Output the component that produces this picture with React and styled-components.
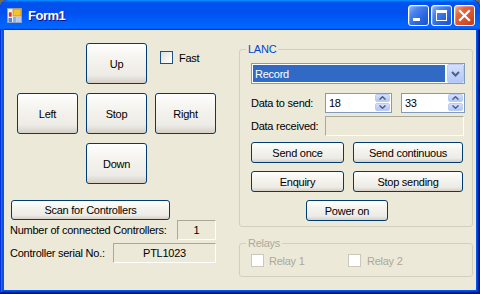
import React from 'react';
import styled, { createGlobalStyle } from 'styled-components';

const Global = createGlobalStyle`
  html, body { margin: 0; padding: 0; background: #6e6b5e; }
  body {
    width: 480px; height: 294px; overflow: hidden;
    font-family: "Liberation Sans", Arial, sans-serif;
  }
`;

const Window = styled.div`
  width: 480px; height: 294px; box-sizing: border-box;
  display: flex; flex-direction: column;
  background: #0055ea;
  border-radius: 8px 8px 0 0;
  overflow: hidden;
  box-shadow: inset -1px -1px #00138c, inset 1px 1px #0831d9,
    inset -2px -2px #001ea0, inset 2px 2px #166aee,
    inset -3px -3px #003bda, inset 3px 3px #0855dd;
`;

const TitleBar = styled.div`
  height: 30px; flex: none; box-sizing: border-box;
  display: flex; align-items: center;
  padding: 0 5px 0 7px;
  border-radius: 8px 8px 0 0;
  background: linear-gradient(180deg, #0997ff, #0053ee 8%, #0050ee 40%, #0066ff 88%, #0066ff 93%, #005bff 95%, #003dd7 96%, #003dd7);
`;

const TitleText = styled.span`
  margin-left: 6px;
  color: #fff;
  font: bold 13px "Liberation Sans", Arial, sans-serif;
  letter-spacing: -0.5px;
  text-shadow: 1px 1px #0f1089;
`;

const TitleButtons = styled.div`
  margin-left: auto;
  display: flex; gap: 2px;
`;

const TitleButton = styled.div`
  width: 21px; height: 21px; box-sizing: border-box;
  border: 1px solid #fff; border-radius: 3px;
  display: flex; align-items: center; justify-content: center;
  background: ${p => p.$close
    ? 'linear-gradient(135deg, #f4a98a 0%, #e2673f 30%, #d9502a 65%, #c43c14 100%)'
    : 'linear-gradient(135deg, #8fb4fa 0%, #4a83ee 30%, #2a66e0 65%, #1c52cf 100%)'};
  box-shadow: inset 1px 1px rgba(255,255,255,0.25);
`;

const Client = styled.div`
  flex: 1;
  margin: 0 4px 4px;
  background: #ece9d8;
  display: grid;
  grid-template-columns: 235px 234px;
  font-size: 11px;
  letter-spacing: -0.25px;
  color: #000;
`;

const LeftColumn = styled.div`
  padding: 13px 0 0 6px;
  display: flex; flex-direction: column; align-items: flex-start;
`;

const DPad = styled.div`
  margin-left: 7px;
  display: grid;
  grid-template-columns: repeat(3, 61px);
  grid-template-rows: repeat(3, 41px);
  column-gap: 8px; row-gap: 9px;
`;

const XPButton = styled.button`
  box-sizing: border-box;
  width: ${p => p.$w ? `${p.$w}px` : '100%'};
  height: ${p => p.$h || 21}px;
  margin: 0; padding: 0;
  border: 1px solid #003c74; border-radius: 3px;
  background: linear-gradient(180deg, #ffffff 0%, #f5f4ef 35%, #ecebe6 80%, #d6d0c5 100%);
  font: 11px "Liberation Sans", Arial, sans-serif;
  letter-spacing: -0.25px;
  color: #000;
  grid-column: ${p => p.$col || 'auto'};
  grid-row: ${p => p.$row || 'auto'};
`;

const CheckRow = styled.label`
  display: flex; align-items: center; gap: ${p => p.$gap || 6}px;
  color: ${p => p.$disabled ? '#aca899' : '#000'};
  grid-column: ${p => p.$col || 'auto'};
  grid-row: ${p => p.$row || 'auto'};
  align-self: start;
  padding: ${p => p.$pad || 0};
  height: 13px;
`;

const CheckBox = styled.span`
  width: 13px; height: 13px; box-sizing: border-box; flex: none;
  border: 1px solid ${p => p.$disabled ? '#cac8bb' : '#1c5180'};
  background: ${p => p.$disabled ? '#ffffff' : 'linear-gradient(135deg, #dcdcd7 0%, #f4f4f1 60%, #ffffff 100%)'};
`;

const ScanButton = styled(XPButton)`
  margin: 16px 0 0 1px;
`;

const InfoRow = styled.div`
  width: 206px; height: 20px;
  margin-top: ${p => p.$mt || 0}px;
  display: flex; align-items: center; justify-content: space-between;
`;

const SunkenBox = styled.div`
  box-sizing: border-box;
  width: ${p => p.$w}px; height: 20px;
  border-top: 1px solid #aca899; border-left: 1px solid #aca899;
  border-bottom: 1px solid #fff; border-right: 1px solid #fff;
  display: flex; align-items: center;
  justify-content: ${p => p.$center ? 'center' : 'flex-start'};
`;

const RightColumn = styled.div`
  padding-top: 19px;
  display: flex; flex-direction: column;
`;

const GroupBox = styled.div`
  position: relative;
  box-sizing: border-box;
  width: 234px;
  margin-top: ${p => p.$mt || 0}px;
  border: 1px solid #d0d0bf; border-radius: 3px;
  padding: ${p => p.$pad};
`;

const GroupTitle = styled.span`
  position: absolute; top: -7px; left: 6px;
  padding: 0 2px;
  line-height: 13px;
  background: #ece9d8;
  color: ${p => p.$disabled ? '#aca899' : '#0046d5'};
`;

const Combo = styled.div`
  box-sizing: border-box; width: 214px; height: 21px;
  border: 1px solid #7f9db9; background: #fff;
  display: flex; padding: 0;
`;

const ComboSelected = styled.div`
  flex: 1; margin: 1px 2px 1px 1px;
  background: #316ac5; color: #fff;
  display: flex; align-items: center; padding-left: 2px;
`;

const BlueButton = styled.div`
  box-sizing: border-box;
  width: ${p => p.$w}px;
  flex: ${p => p.$flex ? 1 : 'none'};
  border: 1px solid #bacbf5; border-radius: 2px;
  background: linear-gradient(180deg, #d5e0fb 0%, #c3d3fa 50%, #b3c6f5 100%);
  display: flex; align-items: center; justify-content: center;
`;

const FormRow = styled.div`
  display: grid;
  grid-template-columns: ${p => p.$cols};
  height: 20px; align-items: center;
  margin-top: ${p => p.$mt || 0}px;
`;

const SecondNumeric = styled.div`
  padding-left: 9px;
`;

const NumericBox = styled.div`
  box-sizing: border-box; height: 20px;
  border: 1px solid #7f9db9; background: #fff;
  display: flex; align-items: stretch;
`;

const NumericValue = styled.div`
  flex: 1; padding-left: 3px;
  display: flex; align-items: center;
`;

const Spin = styled.div`
  width: 15px; margin: 0 1px 1px 0;
  display: flex; flex-direction: column; gap: 1px;
`;

const ButtonGrid = styled.div`
  margin-top: 6px;
  display: grid;
  grid-template-columns: 93px 110px;
  grid-auto-rows: 21px;
  column-gap: 9px; row-gap: 8px;
`;

const PowerButton = styled(XPButton)`
  margin: 8px 0 0 55px;
`;

const RelayRow = styled.div`
  display: grid;
  grid-template-columns: 97px auto;
`;

const ChevronDown = () => (
  <svg width="9" height="6" viewBox="0 0 9 6">
    <path d="M1 1 L4.5 4.5 L8 1" fill="none" stroke="#4d6185" strokeWidth="2" />
  </svg>
);

const SpinArrow = ({ up }) => (
  <svg width="7" height="4" viewBox="0 0 7 4">
    <path d={up ? 'M0.5 3.5 L3.5 0.8 L6.5 3.5' : 'M0.5 0.5 L3.5 3.2 L6.5 0.5'} fill="none" stroke="#4d6185" strokeWidth="1.5" />
  </svg>
);

const AppIcon = () => (
  <svg width="15" height="15" viewBox="0 0 15 15">
    <rect x="0.5" y="0.5" width="14" height="14" fill="#e8eef8" stroke="#8ea4c8" />
    <rect x="6" y="1" width="8" height="7" fill="#f6c22c" stroke="#c48a10" strokeWidth="0.8" />
    <rect x="1.5" y="4" width="3.5" height="5" fill="#e0301e" stroke="#fff" strokeWidth="0.6" />
    <rect x="1.5" y="10" width="3.5" height="4" fill="#5a82d0" />
    <rect x="6" y="9" width="3.5" height="5" fill="#8fb0e6" />
    <rect x="10" y="9" width="4" height="5" fill="#b5c9ee" />
  </svg>
);

const NumericUpDown = ({ value }) => (
  <NumericBox>
    <NumericValue>{value}</NumericValue>
    <Spin>
      <BlueButton $flex><SpinArrow up /></BlueButton>
      <BlueButton $flex><SpinArrow /></BlueButton>
    </Spin>
  </NumericBox>
);

export default function App() {
  return (
    <>
      <Global />
      <Window>
        <TitleBar>
          <AppIcon />
          <TitleText>Form1</TitleText>
          <TitleButtons>
            <TitleButton>
              <svg width="19" height="19" viewBox="0 0 19 19">
                <rect x="4" y="12" width="7" height="3" fill="#fff" />
              </svg>
            </TitleButton>
            <TitleButton>
              <svg width="19" height="19" viewBox="0 0 19 19">
                <rect x="4.5" y="4.5" width="10" height="10" fill="none" stroke="#fff" />
                <rect x="4" y="4" width="11" height="3" fill="#fff" />
              </svg>
            </TitleButton>
            <TitleButton $close>
              <svg width="19" height="19" viewBox="0 0 19 19">
                <path d="M5 5 L14 14 M14 5 L5 14" stroke="#fff" strokeWidth="2.2" strokeLinecap="square" />
              </svg>
            </TitleButton>
          </TitleButtons>
        </TitleBar>

        <Client>
          <LeftColumn>
            <DPad>
              <XPButton $h={41} $col={2} $row={1}>Up</XPButton>
              <CheckRow $col={3} $row={1} $pad="8px 0 0 5px">
                <CheckBox />
                Fast
              </CheckRow>
              <XPButton $h={41} $col={1} $row={2}>Left</XPButton>
              <XPButton $h={41} $col={2} $row={2}>Stop</XPButton>
              <XPButton $h={41} $col={3} $row={2}>Right</XPButton>
              <XPButton $h={41} $col={2} $row={3}>Down</XPButton>
            </DPad>
            <ScanButton $w={159} $h={20}>Scan for Controllers</ScanButton>
            <InfoRow>
              <span>Number of connected Controllers:</span>
              <SunkenBox $w={39} $center>1</SunkenBox>
            </InfoRow>
            <InfoRow $mt={3}>
              <span>Controller serial No.:</span>
              <SunkenBox $w={103} $center>PTL1023</SunkenBox>
            </InfoRow>
          </LeftColumn>

          <RightColumn>
            <GroupBox $pad="13px 7px 5px 11px">
              <GroupTitle>LANC</GroupTitle>
              <Combo>
                <ComboSelected>Record</ComboSelected>
                <BlueButton $w={17}><ChevronDown /></BlueButton>
              </Combo>
              <FormRow $cols="74px 67px 73px" $mt={9}>
                <span>Data to send:</span>
                <NumericUpDown value="18" />
                <SecondNumeric>
                  <NumericUpDown value="33" />
                </SecondNumeric>
              </FormRow>
              <FormRow $cols="74px 139px" $mt={3}>
                <span>Data received:</span>
                <SunkenBox $w={139} />
              </FormRow>
              <ButtonGrid>
                <XPButton>Send once</XPButton>
                <XPButton>Send continuous</XPButton>
                <XPButton>Enquiry</XPButton>
                <XPButton>Stop sending</XPButton>
              </ButtonGrid>
              <PowerButton $w={82}>Power on</PowerButton>
            </GroupBox>

            <GroupBox $mt={16} $pad="10px 7px 9px 11px">
              <GroupTitle $disabled>Relays</GroupTitle>
              <RelayRow>
                <CheckRow $disabled $gap={5}>
                  <CheckBox $disabled />
                  Relay 1
                </CheckRow>
                <CheckRow $disabled $gap={6}>
                  <CheckBox $disabled />
                  Relay 2
                </CheckRow>
              </RelayRow>
            </GroupBox>
          </RightColumn>
        </Client>
      </Window>
    </>
  );
}
